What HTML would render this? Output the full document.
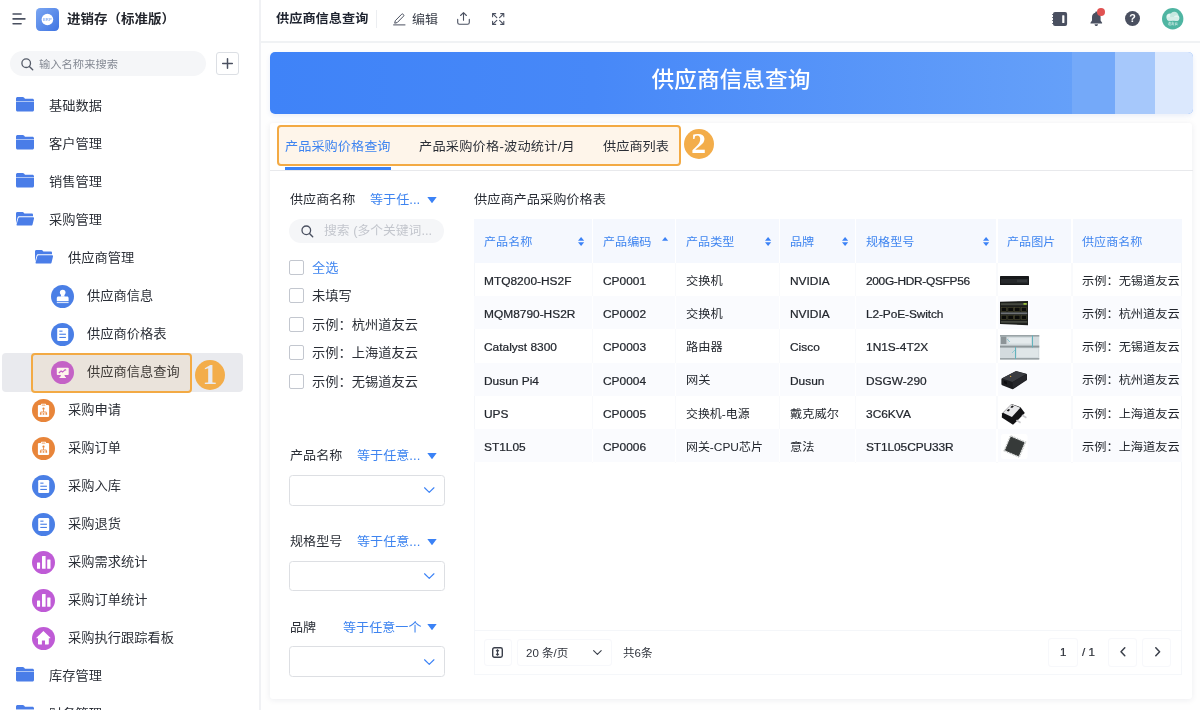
<!DOCTYPE html>
<html lang="zh-CN">
<head>
<meta charset="utf-8">
<title>供应商信息查询</title>
<style>
*{box-sizing:border-box;margin:0;padding:0}
html,body{width:1200px;height:710px;overflow:hidden;background:#fefefe}
body{font-family:"Liberation Sans","Noto Sans CJK SC",sans-serif;color:#2a2e36;position:relative;font-size:12.29px}
#app{position:absolute;left:0;top:0;width:1200px;height:710px;overflow:hidden;will-change:transform;background:#fefefe}
.t{position:absolute;white-space:nowrap;line-height:20px;height:20px}
.t,.lb,.tht,.td{transform:scaleX(1.058);transform-origin:0 50%}
.t.nx{transform:none}
.cx{transform-origin:50% 50%}
svg{position:absolute;overflow:visible}
#side{position:absolute;left:0;top:0;width:261px;height:710px;background:#fff;border-right:2px solid #f0f1f4}
.mi{position:absolute;left:0;width:259px;height:38px}
.mi .lb{position:absolute;top:9.300px;line-height:20px;height:20px;font-size:12.52px;color:#2a2e36;white-space:nowrap}
.l0 .ic{left:15.8px;top:10.300px}
.l0 .lb{left:49px}
.l1 .ic{left:34.9px;top:10.300px}
.l1 .lb{left:68.3px}
.l1 .ci{left:32px;top:7.900px}
.l2 .ci{left:51.3px;top:7.900px}
.l2 .lb{left:87px}
#top{position:absolute;left:261px;top:0;width:939px;height:43px;background:#fff;border-bottom:2px solid #f0f2f4}
#banner{position:absolute;left:270px;top:52px;width:922.5px;height:62px;border-radius:5px;overflow:hidden;
background:linear-gradient(90deg,#3f83f8 0%,#4788f8 35%,#65a0f9 87%,#65a0f9 100%);box-shadow:0 2px 5px rgba(60,100,200,.10)}
#card{position:absolute;left:270px;top:123px;width:922px;height:575.5px;background:#fff;border-radius:3px;box-shadow:0 1px 6px rgba(30,40,80,.08)}
.blue{color:#3e84f0}
.cb{position:absolute;left:289.2px;width:15px;height:15px;border:1px solid #c3c7cf;border-radius:2px;background:#fff}
.sel{position:absolute;left:289.3px;width:155.6px;height:30.6px;border:1px solid #dddfe3;border-radius:3.5px;background:#fff}
.th{position:absolute;top:219px;height:43.7px;background:#f5f8fe}
.tht{position:absolute;font-size:11.43px;color:#3e84f0;line-height:20px;height:20px;top:232px;white-space:nowrap}
.td{position:absolute;font-size:11.700px;color:#22262d;transform:scaleX(1.02);line-height:20px;height:20px;white-space:nowrap}
.td.c{transform:scaleX(1.045)}
.td.l{-webkit-text-stroke:.22px #22262d}
.row{position:absolute;left:473.7px;width:708.8px;height:33.3px}
.row.alt{background:#fafbfe}
.f13{font-size:12.38px}
</style>
</head>
<body>
<div id="app">
<div id="side">
<svg style="left:12.400px;top:13.100px" width="14" height="12" viewBox="0 0 14 12"><path d="M1.100 1h8M1.100 5.900h11.800M1.100 10.700h8" stroke="#4a5060" stroke-width="1.600" stroke-linecap="round" fill="none"/></svg>
<svg style="left:36.200px;top:7.600px" width="23" height="23" viewBox="0 0 23 23"><defs><linearGradient id="lg" x1="0" y1="0" x2="1" y2="1"><stop offset="0" stop-color="#7aa6f2"/><stop offset="1" stop-color="#3f74e2"/></linearGradient></defs><rect width="23" height="23" rx="4.200" fill="url(#lg)"/><circle cx="11.400" cy="11.500" r="5.800" fill="#fff"/><text x="11.400" y="13" font-size="4.200" font-weight="bold" fill="#8fb3f3" text-anchor="middle" font-family="Liberation Sans,sans-serif">ERP</text></svg>
<div class="t" style="left:67px;top:8.700px;font-size:12.76px;font-weight:bold;color:#23262d">进销存（标准版）</div>
<div style="position:absolute;left:10px;top:51.300px;width:196px;height:24.700px;border-radius:13px;background:#f5f6f8"></div>
<svg style="left:20.800px;top:57.600px" width="13" height="13" viewBox="0 0 13 13"><circle cx="5.200" cy="5.200" r="4.300" stroke="#555b68" stroke-width="1.300" fill="none"/><path d="M8.400 8.500l3.300 3.200" stroke="#555b68" stroke-width="1.400" stroke-linecap="round"/></svg>
<div class="t" style="left:38.600px;top:53.600px;font-size:10.68px;color:#858a94">输入名称来搜索</div>
<div style="position:absolute;left:216px;top:52.200px;width:23px;height:23px;border:1px solid #dcdfe4;border-radius:3px;background:#fff"></div>
<svg style="left:222px;top:58.200px" width="11" height="11" viewBox="0 0 11 11"><path d="M5.500 .7v9.600M.7 5.500h9.600" stroke="#4a5060" stroke-width="1.500" stroke-linecap="round" fill="none"/></svg>
<div style="position:absolute;left:2.200px;top:353.400px;width:241px;height:38.300px;border-radius:4px;background:#e9eaee"></div>
<div class="mi l0" style="top:87px"><svg class="ic" width="18" height="14.500" viewBox="0 0 18 15" preserveAspectRatio="none"><path d="M1.6 0h5.1c.5 0 1 .2 1.300.6L9 1.800h7.400c.9 0 1.600.7 1.600 1.600v.9H0V1.600C0 .7.700 0 1.600 0z" fill="#4a7de8"/><path d="M0 5h18v8.400c0 .9-.7 1.600-1.600 1.600H1.600C.7 15 0 14.300 0 13.400z" fill="#4a7de8"/></svg><div class="lb">基础数据</div></div>
<div class="mi l0" style="top:125px"><svg class="ic" width="18" height="14.500" viewBox="0 0 18 15" preserveAspectRatio="none"><path d="M1.6 0h5.1c.5 0 1 .2 1.300.6L9 1.800h7.400c.9 0 1.600.7 1.600 1.600v.9H0V1.600C0 .7.700 0 1.600 0z" fill="#4a7de8"/><path d="M0 5h18v8.400c0 .9-.7 1.600-1.600 1.600H1.600C.7 15 0 14.300 0 13.400z" fill="#4a7de8"/></svg><div class="lb">客户管理</div></div>
<div class="mi l0" style="top:163px"><svg class="ic" width="18" height="14.500" viewBox="0 0 18 15" preserveAspectRatio="none"><path d="M1.6 0h5.1c.5 0 1 .2 1.300.6L9 1.800h7.400c.9 0 1.600.7 1.600 1.600v.9H0V1.600C0 .7.700 0 1.600 0z" fill="#4a7de8"/><path d="M0 5h18v8.400c0 .9-.7 1.600-1.600 1.600H1.600C.7 15 0 14.300 0 13.400z" fill="#4a7de8"/></svg><div class="lb">销售管理</div></div>
<div class="mi l0" style="top:201px"><svg class="ic" width="18" height="13.700" viewBox="0 0 18 13.200" preserveAspectRatio="none" style="margin-top:.4px"><path d="M0 1.400C0 .6.600 0 1.400 0H6.600c.4 0 .8.200 1 .5l.8 1H15.800c.7 0 1.200.5 1.200 1.200V4.100H3.300c-.8 0-1.500.5-1.700 1.300L0 11.300z" fill="#4a7de8"/><path d="M3.500 5H17.100c.6 0 1.100.6.900 1.200L16.500 12.200c-.2.500-.7.900-1.200.900H1.300c-.5 0-.9-.5-.7-1L2.400 5.900c.100-.5.600-.9 1.100-.9z" fill="#4a7de8"/></svg><div class="lb">采购管理</div></div>
<div class="mi l1" style="top:239px"><svg class="ic" width="18" height="13.700" viewBox="0 0 18 13.200" preserveAspectRatio="none" style="margin-top:.4px"><path d="M0 1.400C0 .6.600 0 1.400 0H6.600c.4 0 .8.200 1 .5l.8 1H15.800c.7 0 1.200.5 1.200 1.200V4.100H3.300c-.8 0-1.500.5-1.700 1.300L0 11.300z" fill="#4a7de8"/><path d="M3.500 5H17.100c.6 0 1.100.6.900 1.200L16.500 12.200c-.2.500-.7.900-1.200.900H1.300c-.5 0-.9-.5-.7-1L2.400 5.900c.100-.5.600-.9 1.100-.9z" fill="#4a7de8"/></svg><div class="lb">供应商管理</div></div>
<div class="mi l2" style="top:277px"><svg class="ci" width="23" height="23" viewBox="0 0 23 23"><circle cx="11.5" cy="11.5" r="11.5" fill="#4a7fe6"/><circle cx="11.7" cy="7.600" r="2.800" fill="#fff"/><path d="M10.300 8.500h2.800l.5 3.200h-3.800z" fill="#fff"/><path d="M7.300 11.400h8.800c.8 0 1.500.7 1.500 1.500v3H5.800v-3c0-.8.700-1.500 1.500-1.500z" fill="#fff"/><rect x="5.800" y="16.800" width="11.800" height="1.300" fill="#fff" opacity=".8"/></svg><div class="lb">供应商信息</div></div>
<div class="mi l2" style="top:315px"><svg class="ci" width="23" height="23" viewBox="0 0 23 23"><circle cx="11.5" cy="11.5" r="11.5" fill="#4a7fe6"/><rect x="6.200" y="5" width="11" height="13" rx="1.300" fill="#fff"/><rect x="8.300" y="7.600" width="3.200" height="1.100" fill="#4a7fe6"/><rect x="8.300" y="10.700" width="6.600" height="1.100" fill="#4a7fe6"/><rect x="8.300" y="13.900" width="6.600" height="1.100" fill="#4a7fe6"/></svg><div class="lb">供应商价格表</div></div>
<div class="mi l2" style="top:353px"><svg class="ci" width="23" height="23" viewBox="0 0 23 23"><circle cx="11.5" cy="11.5" r="11.5" fill="#bf5bd6"/><rect x="5.800" y="6.800" width="11.900" height="7.300" rx=".8" fill="#fff"/><path d="M10 14h3.400l.9 2.300H9.100z" fill="#fff"/><rect x="8.500" y="16" width="6.400" height="1" fill="#fff"/><path d="M7.800 12l2.300-2 1.500 1 2.700-2.300" stroke="#bf5bd6" stroke-width="1.100" fill="none"/><path d="M13.300 8.200h1.800v1.800z" fill="#bf5bd6"/></svg><div class="lb">供应商信息查询</div></div>
<div class="mi l1" style="top:391px"><svg class="ci" width="23" height="23" viewBox="0 0 23 23"><circle cx="11.5" cy="11.5" r="11.5" fill="#e8853a"/><rect x="5.900" y="5.900" width="11.200" height="12" rx="1.200" fill="#fff"/><rect x="8.900" y="4.800" width="5.200" height="2.200" rx=".7" fill="#fff"/><rect x="9.700" y="5.700" width="3.600" height=".8" fill="#e8853a"/><circle cx="11.500" cy="9.700" r="1.100" fill="#e8853a"/><path d="M11.500 10.500v2.500M8.700 14.700v-1.700h5.600v1.700" stroke="#e8853a" stroke-width=".8" fill="none"/><rect x="7.900" y="14.200" width="1.600" height="1.500" fill="#e8853a"/><rect x="10.700" y="14.200" width="1.600" height="1.500" fill="#e8853a"/><rect x="13.500" y="14.200" width="1.600" height="1.500" fill="#e8853a"/></svg><div class="lb">采购申请</div></div>
<div class="mi l1" style="top:429px"><svg class="ci" width="23" height="23" viewBox="0 0 23 23"><circle cx="11.5" cy="11.5" r="11.5" fill="#e8853a"/><rect x="5.900" y="5.900" width="11.200" height="12" rx="1.200" fill="#fff"/><rect x="8.900" y="4.800" width="5.200" height="2.200" rx=".7" fill="#fff"/><rect x="9.700" y="5.700" width="3.600" height=".8" fill="#e8853a"/><circle cx="11.500" cy="9.700" r="1.100" fill="#e8853a"/><path d="M11.500 10.500v2.500M8.700 14.700v-1.700h5.600v1.700" stroke="#e8853a" stroke-width=".8" fill="none"/><rect x="7.900" y="14.200" width="1.600" height="1.500" fill="#e8853a"/><rect x="10.700" y="14.200" width="1.600" height="1.500" fill="#e8853a"/><rect x="13.500" y="14.200" width="1.600" height="1.500" fill="#e8853a"/></svg><div class="lb">采购订单</div></div>
<div class="mi l1" style="top:467px"><svg class="ci" width="23" height="23" viewBox="0 0 23 23"><circle cx="11.5" cy="11.5" r="11.5" fill="#4a7fe6"/><rect x="6.200" y="5" width="11" height="13" rx="1.300" fill="#fff"/><rect x="8.300" y="7.600" width="3.200" height="1.100" fill="#4a7fe6"/><rect x="8.300" y="10.700" width="6.600" height="1.100" fill="#4a7fe6"/><rect x="8.300" y="13.900" width="6.600" height="1.100" fill="#4a7fe6"/></svg><div class="lb">采购入库</div></div>
<div class="mi l1" style="top:505px"><svg class="ci" width="23" height="23" viewBox="0 0 23 23"><circle cx="11.5" cy="11.5" r="11.5" fill="#4a7fe6"/><rect x="6.200" y="5" width="11" height="13" rx="1.300" fill="#fff"/><rect x="8.300" y="7.600" width="3.200" height="1.100" fill="#4a7fe6"/><rect x="8.300" y="10.700" width="6.600" height="1.100" fill="#4a7fe6"/><rect x="8.300" y="13.900" width="6.600" height="1.100" fill="#4a7fe6"/></svg><div class="lb">采购退货</div></div>
<div class="mi l1" style="top:543px"><svg class="ci" width="23" height="23" viewBox="0 0 23 23"><circle cx="11.5" cy="11.5" r="11.5" fill="#bf5bd6"/><rect x="5" y="11.600" width="3.100" height="6.200" rx=".5" fill="#fff"/><rect x="10" y="5" width="3.600" height="12.800" rx=".5" fill="#fff"/><rect x="15.200" y="8.500" width="3.300" height="9.300" rx=".5" fill="#fff"/></svg><div class="lb">采购需求统计</div></div>
<div class="mi l1" style="top:581px"><svg class="ci" width="23" height="23" viewBox="0 0 23 23"><circle cx="11.5" cy="11.5" r="11.5" fill="#bf5bd6"/><rect x="5" y="11.600" width="3.100" height="6.200" rx=".5" fill="#fff"/><rect x="10" y="5" width="3.600" height="12.800" rx=".5" fill="#fff"/><rect x="15.200" y="8.500" width="3.300" height="9.300" rx=".5" fill="#fff"/></svg><div class="lb">采购订单统计</div></div>
<div class="mi l1" style="top:619px"><svg class="ci" width="23" height="23" viewBox="0 0 23 23"><circle cx="11.5" cy="11.5" r="11.5" fill="#bf5bd6"/><path d="M11.400 4.100l7 6.600c.2.200.1.500-.2.500h-1.400v5.600c0 .4-.3.600-.6.600h-3.200v-4h-3.100v4H6.600c-.4 0-.6-.3-.6-.6v-5.600H4.600c-.3 0-.4-.3-.2-.5z" fill="#fff"/></svg><div class="lb">采购执行跟踪看板</div></div>
<div class="mi l0" style="top:657px"><svg class="ic" width="18" height="14.500" viewBox="0 0 18 15" preserveAspectRatio="none"><path d="M1.6 0h5.1c.5 0 1 .2 1.300.6L9 1.800h7.400c.9 0 1.600.7 1.600 1.600v.9H0V1.600C0 .7.700 0 1.600 0z" fill="#4a7de8"/><path d="M0 5h18v8.400c0 .9-.7 1.600-1.600 1.600H1.600C.7 15 0 14.300 0 13.400z" fill="#4a7de8"/></svg><div class="lb">库存管理</div></div>
<div class="mi l0" style="top:695px"><svg class="ic" width="18" height="14.500" viewBox="0 0 18 15" preserveAspectRatio="none"><path d="M1.6 0h5.1c.5 0 1 .2 1.300.6L9 1.800h7.400c.9 0 1.600.7 1.600 1.600v.9H0V1.600C0 .7.700 0 1.600 0z" fill="#4a7de8"/><path d="M0 5h18v8.400c0 .9-.7 1.600-1.600 1.600H1.600C.7 15 0 14.300 0 13.400z" fill="#4a7de8"/></svg><div class="lb">财务管理</div></div>
<div style="position:absolute;left:31px;top:353.400px;width:161px;height:39.400px;border:2.400px solid #f3aa44;border-radius:4px;background:rgba(243,169,62,.10)"></div>
<div style="position:absolute;left:195px;top:359.700px;width:30px;height:30px;border-radius:50%;background:#f3ad4a"></div>
<div class="t nx" style="left:194.800px;top:359.200px;width:30px;height:30px;line-height:30px;text-align:center;font-family:'Liberation Serif',serif;font-weight:bold;font-size:29.500px;color:#e9eaee">1</div>
</div>
<div id="top"></div>
<div class="t" style="left:276px;top:9.200px;font-size:12.47px;font-weight:bold;color:#1f2430">供应商信息查询</div>
<div style="position:absolute;left:376.300px;top:10px;width:1px;height:18px;background:#eceef1"></div>
<svg style="left:393px;top:12px" width="13" height="14" viewBox="0 0 13 14"><path d="M2.300 8.700L8.700 2.200c.4-.4 1-.4 1.400 0l.5.500c.4.400.4 1 0 1.400L4.200 10.600l-2.500.600z" stroke="#4a5060" stroke-width="1" fill="none" stroke-linejoin="round"/><path d="M.6 12.900h11.400" stroke="#4a5060" stroke-width="1" stroke-linecap="round"/></svg>
<div class="t" style="left:412px;top:10px;font-size:12.29px;color:#3a3f4a">编辑</div>
<svg style="left:457.200px;top:12.400px" width="13" height="13" viewBox="0 0 13 13"><path d="M6.500 8.300V.8M3.600 3.500L6.500 .7l2.900 2.800" stroke="#4a5060" stroke-width="1.100" fill="none" stroke-linecap="round" stroke-linejoin="round"/><path d="M.7 7.400v3c0 1 .8 1.800 1.800 1.800h8c1 0 1.800-.8 1.800-1.800v-3" stroke="#4a5060" stroke-width="1.100" fill="none" stroke-linecap="round"/></svg>
<svg style="left:491.800px;top:13px" width="12.400" height="12" viewBox="0 0 12.400 12"><path d="M.6 3.700V.6h3.100M8.700 .6h3.100v3.100M11.800 8.300v3.100H8.700M3.700 11.400H.6V8.300" stroke="#4a5060" stroke-width="1.100" fill="none" stroke-linejoin="round" stroke-linecap="round"/><path d="M.9 .9l3.900 3.700M11.500 .9L7.600 4.600M11.500 11.100L7.600 7.400M.9 11.100l3.900-3.700" stroke="#4a5060" stroke-width="1.100" fill="none" stroke-linecap="round"/></svg>
<svg style="left:1052px;top:11.600px" width="16" height="14" viewBox="0 0 16 14"><rect x="1" y="0" width="14.100" height="14" rx="2" fill="#4a5060"/><rect x="10.200" y="3.200" width="2.200" height="7.800" rx=".5" fill="#fff"/><path d="M.7 2.500h1.600M.7 5.500h1.600M.7 8.500h1.600M.7 11.500h1.600" stroke="#4a5060" stroke-width="1.200" stroke-linecap="round"/></svg>
<svg style="left:1090px;top:11px" width="13" height="16" viewBox="0 0 13 16"><path d="M6.300 .4c.6 0 1 .4 1 1v.4c2 .5 3.300 2.200 3.300 4.300v3.400l1.500 2.200c.2.300 0 .8-.4.800H.9c-.4 0-.6-.5-.4-.8L2 9.500V6.100c0-2.100 1.400-3.800 3.300-4.300v-.4c0-.6.400-1 1-1z" fill="#4a5060"/><path d="M4.600 13.300h3.400c0 1-.7 1.800-1.700 1.800s-1.700-.8-1.700-1.800z" fill="#4a5060"/></svg>
<div style="position:absolute;left:1097px;top:7.700px;width:8px;height:8px;border-radius:50%;background:#e05252"></div>
<div style="position:absolute;left:1125px;top:11.200px;width:15px;height:15px;border-radius:50%;background:#4a5060"></div>
<div class="t nx" style="left:1125px;top:11.200px;width:15px;height:15px;line-height:15.500px;text-align:center;font-size:10.800px;font-weight:bold;color:#fff">?</div>
<svg style="left:1161.600px;top:8.300px" width="21.400" height="21.400" viewBox="0 0 21.400 21.400"><circle cx="10.700" cy="10.700" r="10.700" fill="#4fb5a2"/><circle cx="8" cy="9" r="3.600" fill="#e4f4f0"/><circle cx="12.300" cy="8" r="4.300" fill="#c6e8e0"/><circle cx="14.600" cy="10" r="2.800" fill="#e4f4f0"/><rect x="5" y="9" width="12" height="3.800" rx="1.800" fill="#d5eee8"/><text x="10.700" y="17.300" font-size="3.400" fill="#e8f6f3" text-anchor="middle" font-family="Noto Sans CJK SC,sans-serif">道友云</text></svg>
<div id="banner">
<div style="position:absolute;left:802.400px;top:0;width:43px;height:62px;background:#74a9f9"></div>
<div style="position:absolute;left:844.500px;top:0;width:41px;height:62px;background:#a6c8fb"></div>
<div style="position:absolute;left:884.700px;top:0;width:39px;height:62px;background:#dbe8fd"></div>
</div>
<div class="t cx" style="left:270px;width:922px;top:62.500px;height:34px;line-height:34px;text-align:center;font-size:21.45px;font-weight:500;color:#fff">供应商信息查询</div>
<div id="card"></div>
<div style="position:absolute;left:270px;top:169.700px;width:922.500px;height:1px;background:#e8e9ec"></div>
<div style="position:absolute;left:284.500px;top:167.300px;width:106px;height:2.600px;background:#3b82f6"></div>
<div style="position:absolute;left:277px;top:125px;width:404px;height:41px;border:2.400px solid #f3aa44;border-radius:4px;background:#fef5ea"></div>
<div class="t f13 blue" style="left:284.800px;top:137px;font-size:12.47px">产品采购价格查询</div>
<div class="t f13" style="left:419px;top:137px;font-size:12.47px;letter-spacing:.2px">产品采购价格-波动统计/月</div>
<div class="t f13" style="left:603px;top:137px;font-size:12.47px">供应商列表</div>
<div style="position:absolute;left:683.500px;top:129.200px;width:30px;height:30px;border-radius:50%;background:#f3ad4a"></div>
<div class="t nx" style="left:683.500px;top:128.400px;width:30px;height:30px;line-height:30px;text-align:center;font-family:'Liberation Serif',serif;font-weight:bold;font-size:29.500px;color:#fff">2</div>
<div class="t f13" style="left:289.500px;top:190.300px">供应商名称</div>
<div class="t f13 blue" style="left:370px;top:190.300px">等于任...</div>
<svg style="left:427.4px;top:197.3px" width="10" height="6" viewBox="0 0 10 6"><path d="M.3 0h9.400L5.400 5.700c-.2.300-.6.300-.8 0z" fill="#3b82f6"/></svg>
<div style="position:absolute;left:289.200px;top:218.700px;width:155.300px;height:24.600px;border-radius:13px;background:#f5f6f8"></div>
<svg style="left:300.800px;top:224.700px" width="13" height="13" viewBox="0 0 13 13"><circle cx="5.300" cy="5.300" r="4.300" stroke="#4a5060" stroke-width="1.300" fill="none"/><path d="M8.500 8.600l3.200 3.200" stroke="#4a5060" stroke-width="1.400" stroke-linecap="round"/></svg>
<div class="t" style="left:323.600px;top:221px;font-size:12.10px;color:#c3c6cd">搜索 (多个关键词...</div>
<div class="cb" style="top:259.7px"></div>
<div class="t" style="left:312.300px;top:257.6px;font-size:12.52px"><span class="blue">全选</span></div>
<div class="cb" style="top:288.2px"></div>
<div class="t" style="left:312.300px;top:286.1px;font-size:12.52px">未填写</div>
<div class="cb" style="top:316.7px"></div>
<div class="t" style="left:312.300px;top:314.6px;font-size:12.52px">示例：杭州道友云</div>
<div class="cb" style="top:345.2px"></div>
<div class="t" style="left:312.300px;top:343.1px;font-size:12.52px">示例：上海道友云</div>
<div class="cb" style="top:373.7px"></div>
<div class="t" style="left:312.300px;top:371.6px;font-size:12.52px">示例：无锡道友云</div>
<div class="t f13" style="left:289.500px;top:446.3px">产品名称</div>
<div class="t f13 blue" style="left:357px;top:446.3px">等于任意...</div>
<svg style="left:427.4px;top:453.09999999999997px" width="10" height="6" viewBox="0 0 10 6"><path d="M.3 0h9.400L5.400 5.700c-.2.300-.6.300-.8 0z" fill="#3b82f6"/></svg>
<div class="sel" style="top:475.2px"></div>
<svg style="left:424.3px;top:487.3px" width="10.500" height="6.700" viewBox="0 0 11 7"><path d="M.6 .8l4.900 4.900L10.400 .8" stroke="#3b82f6" stroke-width="1.200" fill="none" stroke-linecap="round" stroke-linejoin="round"/></svg>
<div class="t f13" style="left:289.500px;top:532.0px">规格型号</div>
<div class="t f13 blue" style="left:357px;top:532.0px">等于任意...</div>
<svg style="left:427.4px;top:538.8px" width="10" height="6" viewBox="0 0 10 6"><path d="M.3 0h9.400L5.400 5.700c-.2.300-.6.300-.8 0z" fill="#3b82f6"/></svg>
<div class="sel" style="top:560.8px"></div>
<svg style="left:424.3px;top:572.9px" width="10.500" height="6.700" viewBox="0 0 11 7"><path d="M.6 .8l4.900 4.900L10.400 .8" stroke="#3b82f6" stroke-width="1.200" fill="none" stroke-linecap="round" stroke-linejoin="round"/></svg>
<div class="t f13" style="left:289.500px;top:617.6px">品牌</div>
<div class="t f13 blue" style="left:342.5px;top:617.6px">等于任意一个</div>
<svg style="left:427.4px;top:624.4px" width="10" height="6" viewBox="0 0 10 6"><path d="M.3 0h9.400L5.400 5.700c-.2.300-.6.300-.8 0z" fill="#3b82f6"/></svg>
<div class="sel" style="top:646.4px"></div>
<svg style="left:424.3px;top:658.5px" width="10.500" height="6.700" viewBox="0 0 11 7"><path d="M.6 .8l4.900 4.900L10.400 .8" stroke="#3b82f6" stroke-width="1.200" fill="none" stroke-linecap="round" stroke-linejoin="round"/></svg>
<div class="t f13" style="left:473.600px;top:190.300px;font-size:12.47px">供应商产品采购价格表</div>
<div style="position:absolute;left:473.700px;top:219px;width:708.800px;height:455.500px;border:1px solid #f5f7fa"></div>
<div style="position:absolute;left:473.700px;top:630.300px;width:708.800px;height:1px;background:#f4f6f9"></div>
<div class="row" style="top:262.7px"></div>
<div class="row alt" style="top:296.0px"></div>
<div class="row" style="top:329.3px"></div>
<div class="row alt" style="top:362.6px"></div>
<div class="row" style="top:395.9px"></div>
<div class="row alt" style="top:429.2px"></div>
<div class="th" style="left:473.700px;width:708.800px"></div>
<div style="position:absolute;left:591.5px;top:219px;width:1.500px;height:43.700px;background:#fff"></div>
<div style="position:absolute;left:591.5px;top:262.700px;width:1.500px;height:200px;background:#f9fafc"></div>
<div style="position:absolute;left:591.5px;top:296.0px;width:1.500px;height:33.300px;background:#fff"></div>
<div style="position:absolute;left:591.5px;top:362.6px;width:1.500px;height:33.300px;background:#fff"></div>
<div style="position:absolute;left:591.5px;top:429.2px;width:1.500px;height:33.300px;background:#fff"></div>
<div style="position:absolute;left:674.6px;top:219px;width:1.500px;height:43.700px;background:#fff"></div>
<div style="position:absolute;left:674.6px;top:262.700px;width:1.500px;height:200px;background:#f9fafc"></div>
<div style="position:absolute;left:674.6px;top:296.0px;width:1.500px;height:33.300px;background:#fff"></div>
<div style="position:absolute;left:674.6px;top:362.6px;width:1.500px;height:33.300px;background:#fff"></div>
<div style="position:absolute;left:674.6px;top:429.2px;width:1.500px;height:33.300px;background:#fff"></div>
<div style="position:absolute;left:778.5px;top:219px;width:1.500px;height:43.700px;background:#fff"></div>
<div style="position:absolute;left:778.5px;top:262.700px;width:1.500px;height:200px;background:#f9fafc"></div>
<div style="position:absolute;left:778.5px;top:296.0px;width:1.500px;height:33.300px;background:#fff"></div>
<div style="position:absolute;left:778.5px;top:362.6px;width:1.500px;height:33.300px;background:#fff"></div>
<div style="position:absolute;left:778.5px;top:429.2px;width:1.500px;height:33.300px;background:#fff"></div>
<div style="position:absolute;left:854.8px;top:219px;width:1.500px;height:43.700px;background:#fff"></div>
<div style="position:absolute;left:854.8px;top:262.700px;width:1.500px;height:200px;background:#f9fafc"></div>
<div style="position:absolute;left:854.8px;top:296.0px;width:1.500px;height:33.300px;background:#fff"></div>
<div style="position:absolute;left:854.8px;top:362.6px;width:1.500px;height:33.300px;background:#fff"></div>
<div style="position:absolute;left:854.8px;top:429.2px;width:1.500px;height:33.300px;background:#fff"></div>
<div style="position:absolute;left:996.0px;top:219px;width:1.500px;height:43.700px;background:#fff"></div>
<div style="position:absolute;left:996.0px;top:262.700px;width:1.500px;height:200px;background:#f9fafc"></div>
<div style="position:absolute;left:996.0px;top:296.0px;width:1.500px;height:33.300px;background:#fff"></div>
<div style="position:absolute;left:996.0px;top:362.6px;width:1.500px;height:33.300px;background:#fff"></div>
<div style="position:absolute;left:996.0px;top:429.2px;width:1.500px;height:33.300px;background:#fff"></div>
<div style="position:absolute;left:1071.2px;top:219px;width:1.500px;height:43.700px;background:#fff"></div>
<div style="position:absolute;left:1071.2px;top:262.700px;width:1.500px;height:200px;background:#f9fafc"></div>
<div style="position:absolute;left:1071.2px;top:296.0px;width:1.500px;height:33.300px;background:#fff"></div>
<div style="position:absolute;left:1071.2px;top:362.6px;width:1.500px;height:33.300px;background:#fff"></div>
<div style="position:absolute;left:1071.2px;top:429.2px;width:1.500px;height:33.300px;background:#fff"></div>
<div class="tht" style="left:484.1px">产品名称</div>
<svg style="left:578.4px;top:236.800px" width="6.200" height="9" viewBox="0 0 6.200 9"><path d="M0 3.800L3.100 0l3.100 3.800z" fill="#3b82f6"/><path d="M0 5.200L3.100 9l3.100-3.800z" fill="#3b82f6"/></svg>
<div class="tht" style="left:602.6px">产品编码</div>
<svg style="left:661.6px;top:236.800px" width="6.200" height="9" viewBox="0 0 6.200 9"><path d="M0 3.800L3.100 0l3.100 3.800z" fill="#3b82f6"/></svg>
<div class="tht" style="left:685.8px">产品类型</div>
<svg style="left:765.4px;top:236.800px" width="6.200" height="9" viewBox="0 0 6.200 9"><path d="M0 3.800L3.100 0l3.100 3.800z" fill="#3b82f6"/><path d="M0 5.200L3.100 9l3.100-3.800z" fill="#3b82f6"/></svg>
<div class="tht" style="left:789.6px">品牌</div>
<svg style="left:841.7px;top:236.800px" width="6.200" height="9" viewBox="0 0 6.200 9"><path d="M0 3.800L3.100 0l3.100 3.800z" fill="#3b82f6"/><path d="M0 5.200L3.100 9l3.100-3.800z" fill="#3b82f6"/></svg>
<div class="tht" style="left:865.9px">规格型号</div>
<svg style="left:983.0px;top:236.800px" width="6.200" height="9" viewBox="0 0 6.200 9"><path d="M0 3.800L3.100 0l3.100 3.800z" fill="#3b82f6"/><path d="M0 5.200L3.100 9l3.100-3.800z" fill="#3b82f6"/></svg>
<div class="tht" style="left:1007.2px">产品图片</div>
<div class="tht" style="left:1082.4px">供应商名称</div>
<div class="td l" style="left:484.1px;top:270.7px">MTQ8200-HS2F</div>
<div class="td l" style="left:602.6px;top:270.7px">CP0001</div>
<div class="td c" style="left:685.8px;top:270.5px">交换机</div>
<div class="td l" style="left:789.6px;top:270.7px">NVIDIA</div>
<div class="td l" style="left:865.9px;top:270.7px;letter-spacing:-.32px">200G-HDR-QSFP56</div>
<div class="td c" style="left:1082.4px;top:270.5px">示例：无锡道友云</div>
<svg style="left:1000px;top:276px" width="29" height="9" viewBox="0 0 29 9"><rect width="29" height="9" rx=".6" fill="#17181a"/><rect x="1" y="3" width="27" height="4.500" fill="#26282b"/><rect x="17" y="3.600" width="10" height="2.600" fill="#34373a"/></svg>
<div class="td l" style="left:484.1px;top:304.0px">MQM8790-HS2R</div>
<div class="td l" style="left:602.6px;top:304.0px">CP0002</div>
<div class="td c" style="left:685.8px;top:303.8px">交换机</div>
<div class="td l" style="left:789.6px;top:304.0px">NVIDIA</div>
<div class="td l" style="left:865.9px;top:304.0px;letter-spacing:-.12px">L2-PoE-Switch</div>
<div class="td c" style="left:1082.4px;top:303.8px">示例：杭州道友云</div>
<svg style="left:1000px;top:301px" width="28" height="24.300" viewBox="0 0 28 24.300"><path d="M0 .8L28 0v24.300L0 23z" fill="#1d1f1c"/><rect x="1.2" y="6.3" width="5.400" height="4.2" fill="#0b0c0a" stroke="#4b4a30" stroke-width=".6"/><rect x="7.9" y="6.3" width="5.400" height="4.2" fill="#0b0c0a" stroke="#4b4a30" stroke-width=".6"/><rect x="14.6" y="6.3" width="5.400" height="4.2" fill="#0b0c0a" stroke="#4b4a30" stroke-width=".6"/><rect x="21.3" y="6.3" width="5.400" height="4.2" fill="#0b0c0a" stroke="#4b4a30" stroke-width=".6"/><rect x="1.2" y="14.2" width="5.400" height="4.2" fill="#0b0c0a" stroke="#4b4a30" stroke-width=".6"/><rect x="7.9" y="14.2" width="5.400" height="4.2" fill="#0b0c0a" stroke="#4b4a30" stroke-width=".6"/><rect x="14.6" y="14.2" width="5.400" height="4.2" fill="#0b0c0a" stroke="#4b4a30" stroke-width=".6"/><rect x="21.3" y="14.2" width="5.400" height="4.2" fill="#0b0c0a" stroke="#4b4a30" stroke-width=".6"/><rect x=".8" y="11.400" width="26.500" height="1.800" fill="#6d7175"/><rect x=".8" y="2.200" width="26.500" height="2" fill="#44473f"/><rect x=".8" y="20" width="26.500" height="1.800" fill="#44473f"/><rect x="23.500" y="2" width="3.200" height="1.800" fill="#9ac33a"/></svg>
<div class="td l" style="left:484.1px;top:337.3px">Catalyst 8300</div>
<div class="td l" style="left:602.6px;top:337.3px">CP0003</div>
<div class="td c" style="left:685.8px;top:337.1px">路由器</div>
<div class="td l" style="left:789.6px;top:337.3px">Cisco</div>
<div class="td l" style="left:865.9px;top:337.3px">1N1S-4T2X</div>
<div class="td c" style="left:1082.4px;top:337.1px">示例：无锡道友云</div>
<svg style="left:1000px;top:334.800px" width="39.300" height="24.600" viewBox="0 0 39.300 24.600"><rect width="39.300" height="24.600" rx="1" fill="#d3dbde"/><rect x="0" y="0" width="39.300" height="1.600" fill="#9aa3a6"/><rect x="0" y="10.600" width="39.300" height="2" fill="#8e979a"/><rect x="0" y="23" width="39.300" height="1.600" fill="#9aa3a6"/><rect x=".8" y="1.600" width="5.600" height="7.500" fill="#8c9497"/><rect x="9" y="3" width="22" height="5.500" fill="#e4eaec"/><rect x="17" y="13.500" width="21" height="8.500" fill="#dfe6e8"/><path d="M32.500 .5v12M15.500 12v12" stroke="#5fb3bd" stroke-width="1"/><path d="M7 4l3 3M12 18l3-3" stroke="#7fc3cb" stroke-width=".8"/></svg>
<div class="td l" style="left:484.1px;top:370.6px">Dusun Pi4</div>
<div class="td l" style="left:602.6px;top:370.6px">CP0004</div>
<div class="td c" style="left:685.8px;top:370.4px">网关</div>
<div class="td l" style="left:789.6px;top:370.6px">Dusun</div>
<div class="td l" style="left:865.9px;top:370.6px">DSGW-290</div>
<div class="td c" style="left:1082.4px;top:370.4px">示例：杭州道友云</div>
<svg style="left:1000.500px;top:371px" width="26" height="18.500" viewBox="0 0 26 18.500"><path d="M1 7.200L14.500 .3c.5-.2 1-.2 1.500 0l9.300 2.500c.5.200.7.600.7 1v4.600c0 .5-.3 1-.8 1.200L12.300 18c-.5.300-1 .3-1.500.1L1.200 14.300c-.5-.2-.8-.7-.8-1.200V8.300c0-.5.200-.9.600-1.100z" fill="#1c1d20"/><path d="M1 7.400L14.600 .5c.4-.2.900-.2 1.300 0l9.200 2.500L11.600 11z" fill="#3b3d42"/><path d="M11.600 11L25.500 3.200v5.300L11.900 17.600z" fill="#26272b"/><circle cx="9.600" cy="5.400" r=".7" fill="#d8a13c"/><rect x="3" y="9.800" width="3" height="2.600" fill="#0c0c0e" transform="skewY(20) translate(0,-1.200)"/></svg>
<div class="td l" style="left:484.1px;top:403.9px">UPS</div>
<div class="td l" style="left:602.6px;top:403.9px">CP0005</div>
<div class="td" style="left:685.8px;top:403.9px">交换机-电源</div>
<div class="td c" style="left:789.6px;top:403.7px">戴克威尔</div>
<div class="td l" style="left:865.9px;top:403.9px">3C6KVA</div>
<div class="td c" style="left:1082.4px;top:403.7px">示例：上海道友云</div>
<svg style="left:1000.500px;top:403px" width="27" height="22" viewBox="0 0 27 22"><path d="M1 10.500L10.500 1l9 3.200 4.300 5.800-8.300 8.500-3.500 3.200L.8 14.500z" fill="#121214"/><path d="M2 9.800L10.300 1.300l9 3.400-8.400 9.200z" fill="#e8e8ea"/><path d="M5.600 7.800l1.800-1.800 1.800.7-1.800 1.800zM9.300 4.300l1.800-1.800 1.800.7-1.800 1.800z" fill="#1a1a1c"/><path d="M21.500 11.500l4.300 2.500-.8 1.500-4.500-2.700zM16 16.500l4 2.600-.9 1.500-4.200-2.800z" fill="#c9c9cc"/></svg>
<div class="td l" style="left:484.1px;top:437.2px">ST1L05</div>
<div class="td l" style="left:602.6px;top:437.2px">CP0006</div>
<div class="td" style="left:685.8px;top:437.2px">网关-CPU芯片</div>
<div class="td c" style="left:789.6px;top:437.0px">意法</div>
<div class="td l" style="left:865.9px;top:437.2px;letter-spacing:-.1px">ST1L05CPU33R</div>
<div class="td c" style="left:1082.4px;top:437.0px">示例：上海道友云</div>
<svg style="left:1000.600px;top:434px" width="26.500" height="25" viewBox="0 0 26.500 25"><rect width="26.500" height="25" rx="2.500" fill="#fff"/><path d="M9.600 1.900l14.800 6.300-6.300 14.800L3.300 16.700z" fill="none" stroke="#b9bcbb" stroke-width="1.600" stroke-dasharray=".9 .8"/><path d="M10 3.200l13 5.500-5.500 13L4.500 16.200z" fill="#363a39" stroke="#363a39" stroke-width="1" stroke-linejoin="round"/></svg>
<div style="position:absolute;left:484px;top:638.600px;width:27.600px;height:27.600px;border:1px solid #f7f8fb;border-radius:3px"></div>
<svg style="left:492.300px;top:646.700px" width="11" height="11" viewBox="0 0 11 11"><rect x=".7" y=".7" width="9.600" height="9.600" rx="1.700" stroke="#3a3f4a" stroke-width="1.400" fill="none"/><path d="M5.500 3v5M4.100 4.200l1.400-1.400 1.400 1.400M4.100 6.800l1.400 1.400 1.400-1.400" stroke="#3a3f4a" stroke-width="1.100" fill="none"/></svg>
<div style="position:absolute;left:517.400px;top:638.600px;width:94.400px;height:27.600px;border:1px solid #f7f8fb;border-radius:3px"></div>
<div class="td" style="left:525.700px;top:643px;font-size:11.300px;color:#30343d">20 条/页</div>
<svg style="left:592.700px;top:650.200px" width="8.800" height="5.200" viewBox="0 0 8.800 5.200"><path d="M.6 .6l3.800 3.900L8.200 .6" stroke="#3a3f4a" stroke-width="1.100" fill="none" stroke-linecap="round" stroke-linejoin="round"/></svg>
<div class="td" style="left:622.900px;top:643px;font-size:11.300px;color:#30343d">共6条</div>
<div style="position:absolute;left:1047.500px;top:637.800px;width:30.500px;height:29.200px;border:1px solid #f7f8fb;border-radius:3px"></div>
<div class="td cx l" style="left:1047.500px;width:30.500px;text-align:center;top:642.200px;font-size:11.300px;color:#30343d">1</div>
<div class="td l" style="left:1081.700px;top:642.200px;font-size:11.300px;color:#30343d">/ 1</div>
<div style="position:absolute;left:1108px;top:637.800px;width:29.300px;height:29.200px;border:1px solid #f7f8fb;border-radius:3px"></div>
<svg style="left:1120px;top:647.200px" width="5.600" height="9.500" viewBox="0 0 5.600 9.500"><path d="M4.800 .8L1 4.750l3.800 3.950" stroke="#3a3f4a" stroke-width="1.500" fill="none" stroke-linecap="round" stroke-linejoin="round"/></svg>
<div style="position:absolute;left:1142.200px;top:637.800px;width:29.300px;height:29.200px;border:1px solid #f7f8fb;border-radius:3px"></div>
<svg style="left:1154.600px;top:647.200px" width="5.600" height="9.500" viewBox="0 0 5.600 9.500"><path d="M.8 .8l3.800 3.950L.8 8.700" stroke="#3a3f4a" stroke-width="1.500" fill="none" stroke-linecap="round" stroke-linejoin="round"/></svg>
</div>
</body>
</html>
